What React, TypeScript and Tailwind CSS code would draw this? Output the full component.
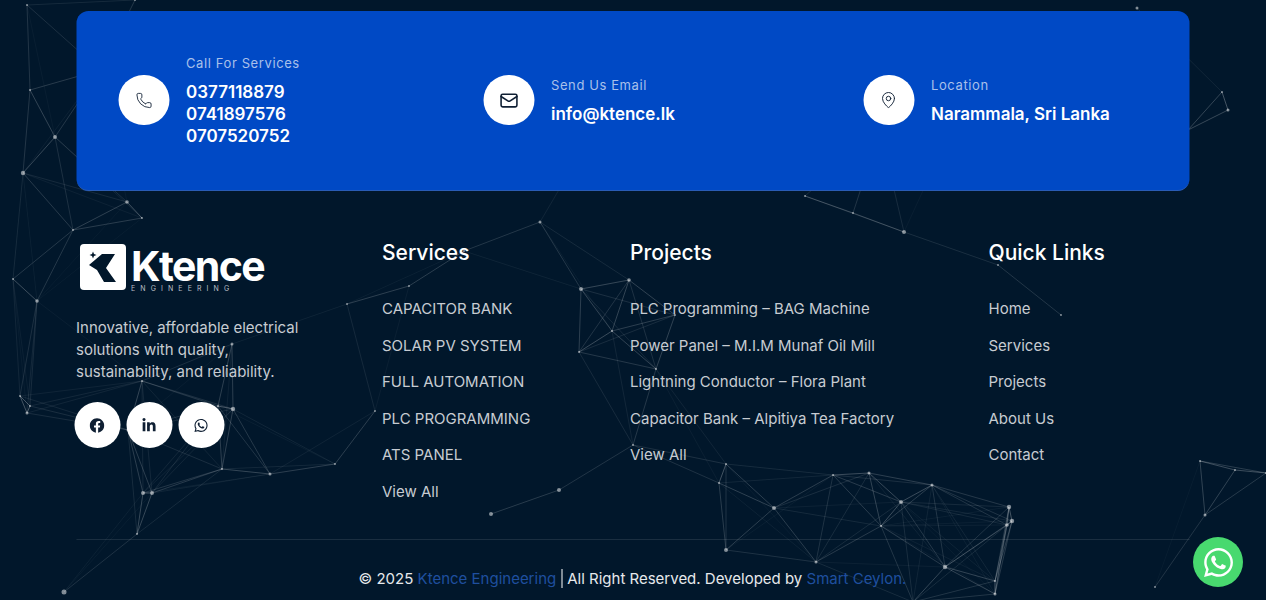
import { Mail, MapPin, Phone } from 'lucide-react';
import { FaFacebook, FaLinkedinIn, FaWhatsapp } from 'react-icons/fa';

// x, y, r of each dot of the network behind the footer
const NODES = [
  [27, 5, 1], [135, 0, 1], [290, -4, 1], [365, -4, 1], [1137, 8, 1.5], [30, 90, 1], [100, 70, 1],
  [55, 137, 2], [23, 173, 2.2], [127, 202, 1.8], [142, 218, 1], [73, 230, 1], [13, 279, 1], [37, 301, 1.8],
  [142, 381, 1], [20, 396, 1], [30, 406, 1], [27, 413, 1.5], [233, 409, 2.2], [218, 406, 1], [232, 344, 1.5],
  [128, 430, 1.5], [222, 469, 1], [270, 474, 1.5], [335, 464, 1], [375, 411, 1], [152, 493, 2], [143, 493, 2],
  [137, 534, 1], [64, 592, 2.5], [347, 304, 1],
  [540, 222, 1.5], [581, 289, 2], [629, 280, 1.8], [612, 331, 1], [579, 352, 1], [656, 369, 1], [633, 445, 1],
  [559, 490, 2], [491, 514, 2], [409, 286, 1], [464, 251, 1], [675, 315, 1], [600, 120, 1], [660, 100, 1],
  [805, 196, 1], [853, 213, 1], [904, 232, 2], [998, 265, 1], [1061, 315, 1], [1030, 130, 1], [880, 130, 1], [960, 110, 1],
  [1222, 92, 1], [1228, 110, 1.5], [1188, 130, 1],
  [726, 464, 1], [719, 483, 1], [774, 508, 2], [726, 550, 2], [816, 562, 1.5], [833, 475, 1], [869, 473, 1.5],
  [881, 526, 1], [901, 502, 2], [932, 485, 1.5], [1009, 507, 2.2], [1012, 521, 2.2], [1007, 525, 1.8],
  [945, 567, 2.2], [995, 581, 1], [995, 594, 1.5], [913, 602, 1],
  [1200, 461, 1], [1266, 473, 1], [1235, 470, 1], [1205, 515, 1.5], [1155, 587, 1],
];

const LINKS: [number, number, number][] = [];
NODES.forEach((a, i) => {
  NODES.slice(i + 1).forEach((b, j) => {
    const d = Math.hypot(a[0] - b[0], a[1] - b[1]);
    if (d < 135) LINKS.push([i, i + 1 + j, 0.3 * (1 - d / 150)]);
  });
});

const SERVICES = ['CAPACITOR BANK', 'SOLAR PV SYSTEM', 'FULL AUTOMATION', 'PLC PROGRAMMING', 'ATS PANEL', 'View All'];
const PROJECTS = [
  'PLC Programming – BAG Machine',
  'Power Panel – M.I.M Munaf Oil Mill',
  'Lightning Conductor – Flora Plant',
  'Capacitor Bank – Alpitiya Tea Factory',
  'View All',
];
const QUICK_LINKS = ['Home', 'Services', 'Projects', 'About Us', 'Contact'];

function Network() {
  return (
    <svg className="absolute inset-0 h-[600px] w-[1266px]" viewBox="0 0 1266 600" fill="none">
      {LINKS.map(([a, b, o]) => (
        <line
          key={`${a}-${b}`}
          x1={NODES[a][0]}
          y1={NODES[a][1]}
          x2={NODES[b][0]}
          y2={NODES[b][1]}
          stroke="#ffffff"
          strokeOpacity={o}
          strokeWidth="1"
        />
      ))}
      {NODES.map(([x, y, r]) => (
        <circle key={`${x}-${y}`} cx={x} cy={y} r={r} fill="#ffffff" fillOpacity="0.5" />
      ))}
    </svg>
  );
}

function ContactItem({ icon, label, lines }: { icon: React.ReactNode; label: string; lines: string[] }) {
  return (
    <div className="flex items-center gap-[17px]">
      <div className="flex h-[50px] w-[51px] shrink-0 items-center justify-center rounded-full bg-white text-[#0f1f33]">
        {icon}
      </div>
      <div>
        <p className="mb-[9px] text-[13px] leading-[20px] tracking-[0.6px] text-[#a9c0ea]">{label}</p>
        {lines.map((line) => (
          <p key={line} className="text-[17px] leading-[21.7px] font-semibold text-white">
            {line}
          </p>
        ))}
      </div>
    </div>
  );
}

function LinkColumn({ title, items, className }: { title: string; items: string[]; className: string }) {
  return (
    <div className={className}>
      <h4 className="mb-[31px] text-[21px] leading-[28px] font-medium text-white">{title}</h4>
      <ul className="flex flex-col gap-[14.5px]">
        {items.map((item) => (
          <li key={item} className="text-[15px] leading-[22px] text-[#c7ccd2]">
            {item}
          </li>
        ))}
      </ul>
    </div>
  );
}

function Logo() {
  return (
    <div className="ml-[3px] flex h-[46px] items-start gap-[5px]">
      <svg width="47" height="46" viewBox="0 0 46 46">
        <rect width="46" height="46" rx="4" fill="#ffffff" />
        <path d="M22 10H35L26 24L36 38H24L17 26L9 21Z" fill="#01172b" />
        <path d="M13 7.5L14 10L16.5 11L14 12L13 14.5L12 12L9.5 11L12 10Z" fill="#01172b" />
      </svg>
      <div className="pt-[3px]">
        <p className="text-[41px] leading-[39px] font-bold tracking-[-1.6px] text-white">Ktence</p>
        <p className="text-[7px] leading-[6px] tracking-[5.1px] text-[#b9bec4]">ENGINEERING</p>
      </div>
    </div>
  );
}

export default function App() {
  return (
    <div className="relative h-[600px] w-[1266px] overflow-hidden bg-[#01172b] font-['Inter',sans-serif]">
      <Network />

      <div className="relative mx-auto w-[1113px] -translate-x-[0.5px] pt-[11px]">
        <div className="grid h-[180px] grid-cols-[365px_380px_1fr] items-center rounded-xl border-b border-[#2a5cb5] bg-[#0049c5] pl-[42px]">
          <ContactItem
            icon={<Phone size={17} strokeWidth={1.25} />}
            label="Call For Services"
            lines={['0377118879', '0741897576', '0707520752']}
          />
          <ContactItem
            icon={<Mail size={19} strokeWidth={2} />}
            label="Send Us Email"
            lines={['info@ktence.lk']}
          />
          <ContactItem
            icon={<MapPin size={18} strokeWidth={1.25} />}
            label="Location"
            lines={['Narammala, Sri Lanka']}
          />
        </div>

        <div className="mt-[48px] flex h-[301px] items-start border-b border-white/10">
          <div className="w-[306px] pt-[5px]">
            <Logo />
            <p className="mt-[27px] w-[230px] text-[15px] leading-[21.8px] text-[#c7ccd2]">
              Innovative, affordable electrical solutions with quality, sustainability, and reliability.
            </p>
            <div className="mt-[20px] -ml-[2px] flex gap-[6px] text-[#0f1f33]">
              <div className="flex h-[46px] w-[46px] items-center justify-center rounded-full bg-white">
                <FaFacebook size={15} />
              </div>
              <div className="flex h-[46px] w-[46px] items-center justify-center rounded-full bg-white">
                <FaLinkedinIn size={15} />
              </div>
              <div className="flex h-[46px] w-[46px] items-center justify-center rounded-full bg-white">
                <FaWhatsapp size={15} />
              </div>
            </div>
          </div>
          <LinkColumn title="Services" items={SERVICES} className="w-[248px]" />
          <LinkColumn title="Projects" items={PROJECTS} className="w-[358.5px]" />
          <LinkColumn title="Quick Links" items={QUICK_LINKS} className="w-[200px]" />
        </div>

        <p className="mt-[28px] text-center text-[15px] leading-[22px] text-[#e6e9ec]">
          © 2025 <span className="text-[#1f4f9f]">Ktence Engineering</span>
          <span className="mx-[5px] border-l border-white" />
          All Right Reserved. Developed by <span className="text-[#1f4f9f]">Smart Ceylon.</span>
        </p>
      </div>

      <div className="absolute top-[537px] left-[1193px] flex h-[50px] w-[50px] items-center justify-center rounded-full bg-[#48d96f] text-white">
        <FaWhatsapp size={33} />
      </div>
    </div>
  );
}
